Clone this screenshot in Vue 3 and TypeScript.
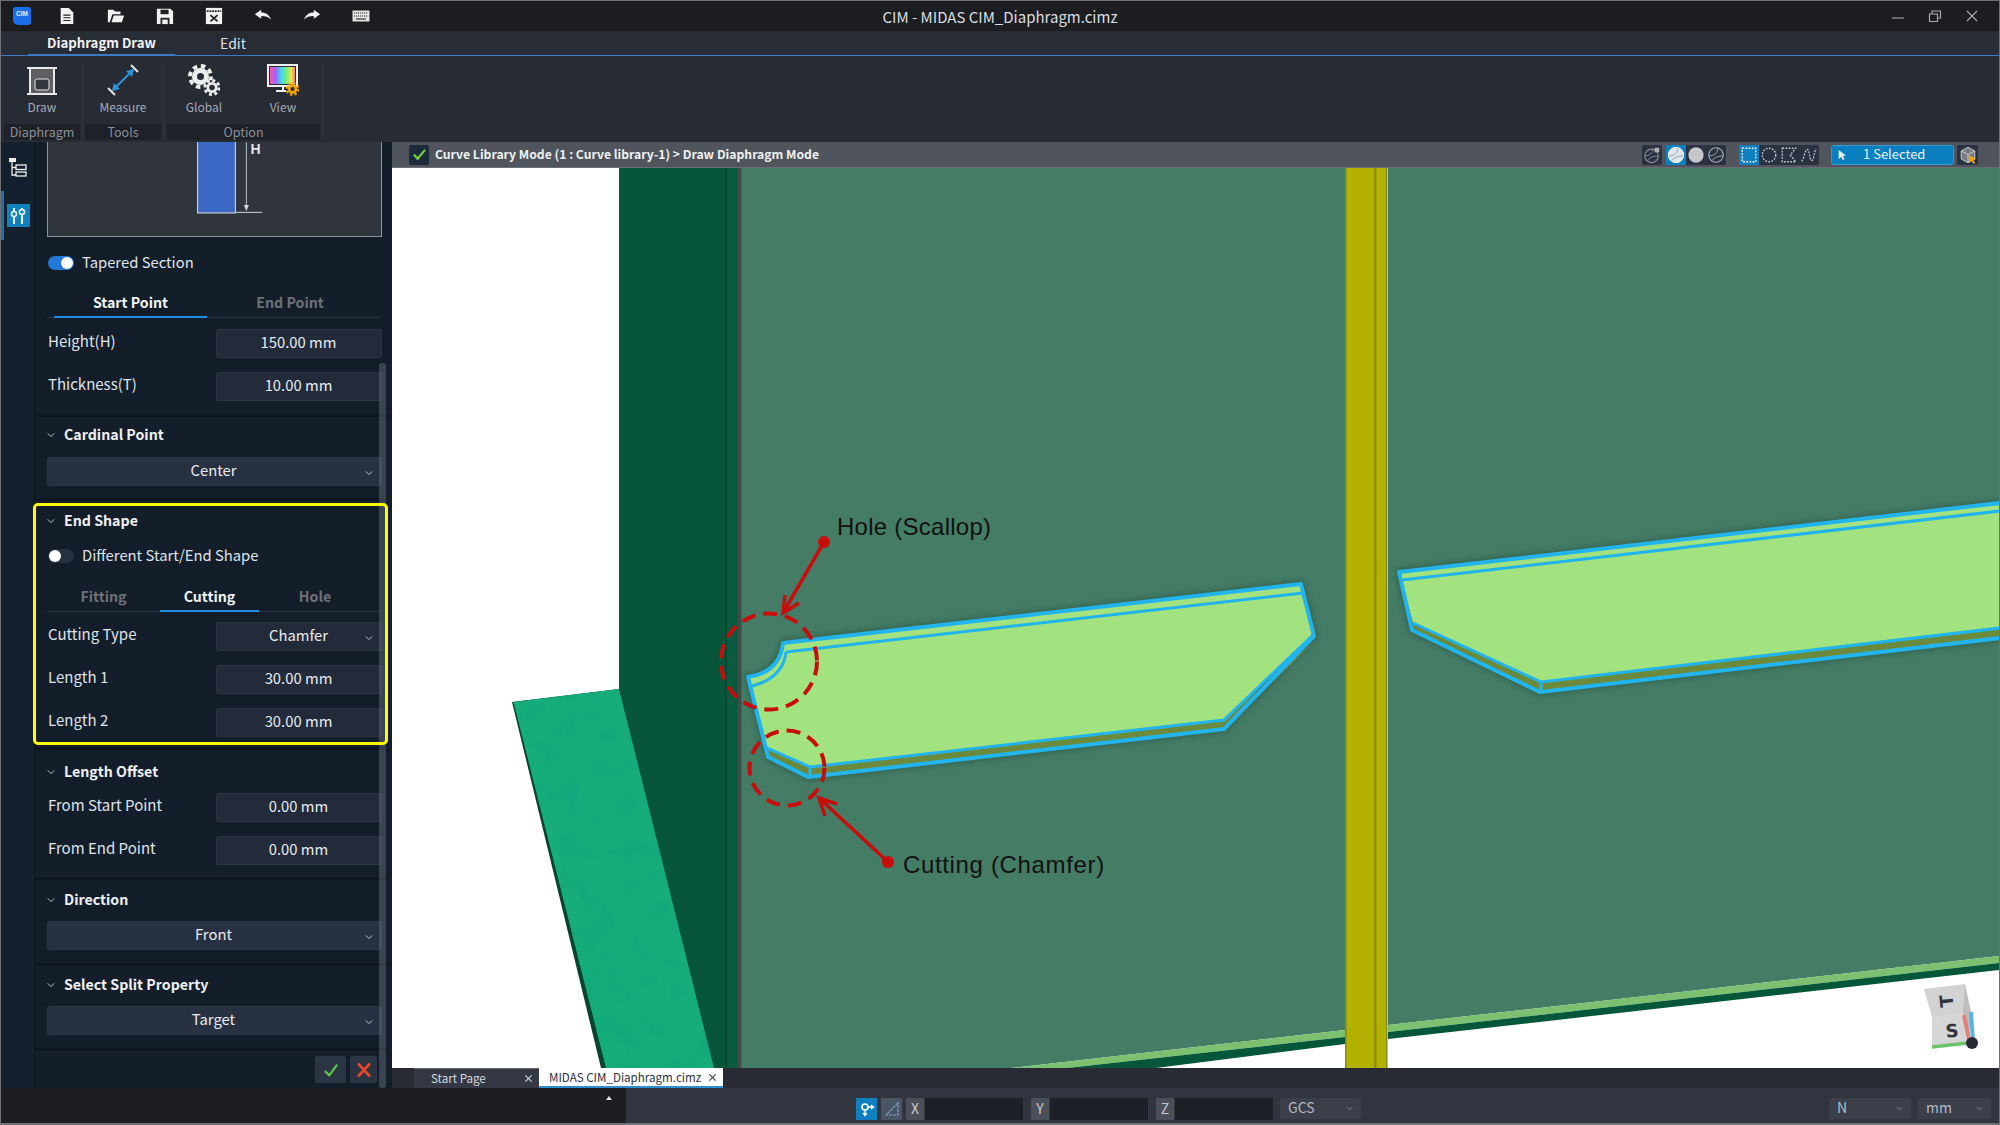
<script setup lang="ts">
interface Row { label: string; value: string; select?: boolean }
const sizeRows: Row[] = [
  { label: 'Height(H)', value: '150.00 mm' },
  { label: 'Thickness(T)', value: '10.00 mm' },
]
const cutRows: Row[] = [
  { label: 'Cutting Type', value: 'Chamfer', select: true },
  { label: 'Length 1', value: '30.00 mm' },
  { label: 'Length 2', value: '30.00 mm' },
]
const offsetRows: Row[] = [
  { label: 'From Start Point', value: '0.00 mm' },
  { label: 'From End Point', value: '0.00 mm' },
]
</script>

<template>
  <div class="app">
    <header class="titlebar">
      <div class="qa">
        <span class="logo">CIM</span>
        <svg class="qi" viewBox="0 0 20 20"><path d="M3 1h9l5 5v13H3z" fill="#f2f2f2"/><path d="M6 9h8M6 12h8M6 15h8" stroke="#222" stroke-width="1.200"/></svg>
        <svg class="qi" viewBox="0 0 20 20"><path d="M1 17V3h6l2 2h6v3H6l-3 9z" fill="#f2f2f2"/><path d="M5 17l2.500-7.500H19L16.500 17z" fill="#f2f2f2"/></svg>
        <svg class="qi" viewBox="0 0 20 20"><path d="M1 2h15l3 3v14H1z" fill="#f2f2f2"/><path d="M5 3h9v5H5z" fill="#222"/><path d="M5 12h10v7H5z" fill="#222"/><path d="M7 14h6v5H7z" fill="#f2f2f2"/></svg>
        <svg class="qi" viewBox="0 0 20 20"><path d="M1 1h18v18H1z" fill="#f2f2f2"/><path d="M2 4.500h16" stroke="#222" stroke-width="2" stroke-dasharray="2 1"/><path d="M6 9l8 7M14 9l-8 7" stroke="#222" stroke-width="2"/></svg>
        <svg class="qi" viewBox="0 0 20 20"><path d="M1 8l7-5v3c6 0 9 3 11 8-3-3-6-4-11-4v3z" fill="#f2f2f2"/></svg>
        <svg class="qi" viewBox="0 0 20 20"><path d="M19 8l-7-5v3C6 6 3 9 1 14c3-3 6-4 11-4v3z" fill="#f2f2f2"/></svg>
        <svg class="qi wide" viewBox="0 0 18 12"><rect x="0.500" y="0.500" width="17" height="11" fill="#e4e4e4"/><path d="M2 3h14M2 6h14" stroke="#333" stroke-width="1.200" stroke-dasharray="1.200 .8"/><path d="M4 9h10" stroke="#333" stroke-width="1.200"/></svg>
      </div>
      <div class="title">CIM - MIDAS CIM_Diaphragm.cimz</div>
      <div class="winctl">
        <svg viewBox="0 0 14 14"><path d="M1 9h12" stroke="#8f9296" stroke-width="1.300"/></svg>
        <svg viewBox="0 0 14 14"><path d="M1.500 5h8v7.500h-8zM4 5V2h8.500v7h-3" fill="none" stroke="#a8aaad" stroke-width="1.200"/></svg>
        <svg viewBox="0 0 14 14"><path d="M2 2l10 10M12 2L2 12" stroke="#a8aaad" stroke-width="1.200"/></svg>
      </div>
    </header>

    <nav class="tabbar">
      <div class="rtab active">Diaphragm Draw</div>
      <div class="rtab">Edit</div>
    </nav>

    <section class="ribbon">
      <div class="group g1">
        <div class="tools">
          <div class="tool">
            <svg viewBox="0 0 32 32" class="ticon"><rect x="5" y="4" width="22" height="26" fill="#5d5f63"/><path d="M1 4h30M1 30h30" stroke="#e8e8e8" stroke-width="2"/><path d="M4 4v26M28 4v26" stroke="#e8e8e8" stroke-width="2"/><rect x="9" y="15" width="14" height="11" rx="2" fill="#32353b" stroke="#e8e8e8" stroke-width="1"/></svg>
            <span>Draw</span>
          </div>
        </div>
        <div class="glabel">Diaphragm</div>
      </div>
      <div class="group g2">
        <div class="tools">
          <div class="tool">
            <svg viewBox="0 0 32 32" class="ticon"><path d="M6 26L26 6" stroke="#2f93d8" stroke-width="2"/><path d="M5 27l2-8 6 6zM27 5l-2 8-6-6z" fill="#2f93d8"/><path d="M1 24l7 7M24 1l7 7" stroke="#e4e4e4" stroke-width="2"/></svg>
            <span>Measure</span>
          </div>
        </div>
        <div class="glabel">Tools</div>
      </div>
      <div class="group g3">
        <div class="tools">
          <div class="tool t-global">
            <svg viewBox="0 0 32 32" class="ticon">
              <circle cx="12.500" cy="12.500" r="8.500" fill="#eceded"/>
              <circle cx="12.500" cy="12.500" r="10.500" fill="none" stroke="#eceded" stroke-width="4" stroke-dasharray="4.500 3.750"/>
              <circle cx="12.500" cy="12.500" r="3.500" fill="#272b34"/>
              <circle cx="24" cy="23.500" r="7.500" fill="#272b34"/>
              <circle cx="24" cy="23.500" r="5.500" fill="#eceded"/>
              <circle cx="24" cy="23.500" r="7" fill="none" stroke="#eceded" stroke-width="3" stroke-dasharray="3 2.500"/>
              <circle cx="24" cy="23.500" r="2.800" fill="#272b34"/>
            </svg>
            <span>Global</span>
          </div>
          <div class="tool t-view">
            <svg viewBox="0 0 32 32" class="ticon">
              <defs><linearGradient id="rb" x1="0" x2="1" y1="0" y2="0"><stop offset="0" stop-color="#ff4fb0"/><stop offset=".25" stop-color="#8f6cff"/><stop offset=".45" stop-color="#46d9f0"/><stop offset=".65" stop-color="#6df07a"/><stop offset=".85" stop-color="#f0e25a"/><stop offset="1" stop-color="#f08a50"/></linearGradient></defs>
              <rect x="1" y="1" width="29" height="21" fill="#272b34" stroke="#f0f0f0" stroke-width="2"/><rect x="3" y="3" width="25" height="17" fill="url(#rb)"/><path d="M16 23v4M9 27h10" stroke="#f0f0f0" stroke-width="2"/>
              <circle cx="25.500" cy="25" r="5" fill="#f2a20c"/>
              <circle cx="25.500" cy="25" r="6" fill="none" stroke="#f2a20c" stroke-width="2" stroke-dasharray="2.400 2.300"/>
              <circle cx="25.500" cy="25" r="2" fill="#272b34"/>
            </svg>
            <span>View</span>
          </div>
        </div>
        <div class="glabel">Option</div>
      </div>
    </section>

    <main class="body">
      <aside class="rail">
        <div class="rail-item">
          <svg viewBox="0 0 20 20"><rect x="1" y="1" width="7" height="4" fill="#f0f0f0"/><path d="M4 5v13h4M4 10.500h4" fill="none" stroke="#f0f0f0" stroke-width="1.300"/><rect x="8" y="8" width="10" height="4.500" fill="none" stroke="#f0f0f0" stroke-width="1.300"/><rect x="8" y="15" width="10" height="4" fill="none" stroke="#f0f0f0" stroke-width="1.300"/></svg>
        </div>
        <div class="rail-item on">
          <span class="railbox">
            <svg viewBox="0 0 20 20"><path d="M6 2v3M6 11v7M14 2v1M14 9v9" stroke="#e8f4fb" stroke-width="2"/><circle cx="6" cy="8" r="2.500" fill="none" stroke="#e8f4fb" stroke-width="1.500"/><circle cx="14" cy="6" r="2.500" fill="none" stroke="#e8f4fb" stroke-width="1.500"/></svg>
          </span>
        </div>
      </aside>

      <div class="panel">
        <div class="sec s-top">
          <div class="preview">
            <svg viewBox="0 0 333 94" class="prevsvg">
              <rect x="150" y="-5" width="38" height="76" fill="#3a68c4" stroke="#c7ccd4" stroke-width="1.200"/>
              <path d="M188 70.500h27" stroke="#b9bdc4" stroke-width="1.200"/>
              <path d="M199 0v66" stroke="#b9bdc4" stroke-width="1"/>
              <path d="M196.500 63h5l-2.500 6z" fill="#d4d6da"/>
              <text x="203" y="12" class="hmark">H</text>
            </svg>
          </div>
          <div class="togrow t1"><span class="tog on"><i></i></span><span class="txt">Tapered Section</span></div>
          <div class="subtabs two t1b">
            <div class="stab on">Start Point</div>
            <div class="stab">End Point</div>
          </div>
          <div class="rows r1">
            <div class="row" v-for="r in sizeRows" :key="r.label">
              <label>{{ r.label }}</label>
              <div class="val">{{ r.value }}</div>
            </div>
          </div>
        </div>

        <div class="sec s-card">
          <div class="head"><svg class="chev" viewBox="0 0 10 6"><path d="M1 1l4 4 4-4" fill="none" stroke="#c6ccd4" stroke-width="1.200"/></svg>Cardinal Point</div>
          <div class="full">Center<svg class="chev sel" viewBox="0 0 10 6"><path d="M1 1l4 4 4-4" fill="none" stroke="#c6ccd4" stroke-width="1.200"/></svg></div>
        </div>

        <div class="sec s-end">
          <div class="highlight"></div>
          <div class="head"><svg class="chev" viewBox="0 0 10 6"><path d="M1 1l4 4 4-4" fill="none" stroke="#c6ccd4" stroke-width="1.200"/></svg>End Shape</div>
          <div class="togrow t2"><span class="tog"><i></i></span><span class="txt">Different Start/End Shape</span></div>
          <div class="subtabs three t2b">
            <div class="stab">Fitting</div>
            <div class="stab on">Cutting</div>
            <div class="stab">Hole</div>
          </div>
          <div class="rows r2">
            <div class="row" v-for="r in cutRows" :key="r.label">
              <label>{{ r.label }}</label>
              <div class="val">{{ r.value }}<svg v-if="r.select" class="chev sel" viewBox="0 0 10 6"><path d="M1 1l4 4 4-4" fill="none" stroke="#c6ccd4" stroke-width="1.200"/></svg></div>
            </div>
          </div>
        </div>

        <div class="sec s-off">
          <div class="head"><svg class="chev" viewBox="0 0 10 6"><path d="M1 1l4 4 4-4" fill="none" stroke="#c6ccd4" stroke-width="1.200"/></svg>Length Offset</div>
          <div class="rows r3">
            <div class="row" v-for="r in offsetRows" :key="r.label">
              <label>{{ r.label }}</label>
              <div class="val">{{ r.value }}</div>
            </div>
          </div>
        </div>

        <div class="sec s-dir">
          <div class="head"><svg class="chev" viewBox="0 0 10 6"><path d="M1 1l4 4 4-4" fill="none" stroke="#c6ccd4" stroke-width="1.200"/></svg>Direction</div>
          <div class="full">Front<svg class="chev sel" viewBox="0 0 10 6"><path d="M1 1l4 4 4-4" fill="none" stroke="#c6ccd4" stroke-width="1.200"/></svg></div>
        </div>

        <div class="sec s-split">
          <div class="head"><svg class="chev" viewBox="0 0 10 6"><path d="M1 1l4 4 4-4" fill="none" stroke="#c6ccd4" stroke-width="1.200"/></svg>Select Split Property</div>
          <div class="full">Target<svg class="chev sel" viewBox="0 0 10 6"><path d="M1 1l4 4 4-4" fill="none" stroke="#c6ccd4" stroke-width="1.200"/></svg></div>
        </div>

        <div class="foot">
          <button class="fbtn"><svg viewBox="0 0 18 16"><path d="M2 9l5 5L16 2" fill="none" stroke="#5cc24a" stroke-width="2.600"/></svg></button>
          <button class="fbtn"><svg viewBox="0 0 16 16"><path d="M2 1.500l12 13M14 1.500l-12 13" fill="none" stroke="#e8452c" stroke-width="2.600"/></svg></button>
        </div>
        <div class="scroll"></div>
      </div>

      <div class="view">
        <div class="vbar">
          <span class="vcheck"><svg viewBox="0 0 16 14"><path d="M2 7l4 4.500L14 2" fill="none" stroke="#6fd03c" stroke-width="2.400"/></svg></span>
          <span class="crumb">Curve Library Mode (1 : Curve library-1) &gt; Draw Diaphragm Mode</span>
          <div class="vtools">
            <div class="vgrp w20">
              <svg viewBox="0 0 20 20"><circle cx="9.500" cy="11" r="7.500" fill="none" stroke="#8d9298" stroke-width="1.200"/><path d="M2 11c5 0 9-3 9-8M5 17c1-3 5-6 12-6" fill="none" stroke="#8d9298" stroke-width="1"/><rect x="13" y="2" width="5" height="5" fill="#aeb2b6"/></svg>
            </div>
            <div class="vgrp w60">
              <span class="cell on"><svg viewBox="0 0 20 20"><circle cx="10" cy="10" r="8.500" fill="#dfe4e8" stroke="#fff"/><path d="M2 11c6 0 10-3 10-9M5 17c1-3 6-6 13-6" fill="none" stroke="#8fa0ac" stroke-width="1"/></svg></span>
              <span class="cell"><svg viewBox="0 0 20 20"><circle cx="10" cy="10" r="8.500" fill="#c4c6ca"/></svg></span>
              <span class="cell"><svg viewBox="0 0 20 20"><circle cx="10" cy="10" r="8" fill="none" stroke="#a9adb2" stroke-width="1.200"/><path d="M2 11c6 0 10-3 10-9M5 17c1-3 6-6 13-6" fill="none" stroke="#a9adb2" stroke-width="1"/></svg></span>
            </div>
            <div class="vgrp w80 gapl">
              <span class="cell on"><svg viewBox="0 0 20 20"><rect x="2.500" y="2.500" width="15" height="15" fill="none" stroke="#f0f8ff" stroke-width="1.500" stroke-dasharray="2 1.500"/></svg></span>
              <span class="cell"><svg viewBox="0 0 20 20"><circle cx="10" cy="10" r="7.500" fill="none" stroke="#c4c8cc" stroke-width="1.500" stroke-dasharray="2 1.500"/></svg></span>
              <span class="cell"><svg viewBox="0 0 20 20"><path d="M2.500 2.500h15l-6 7.500 6 7.500h-15z" fill="none" stroke="#c4c8cc" stroke-width="1.500" stroke-dasharray="2 1.500"/></svg></span>
              <span class="cell"><svg viewBox="0 0 20 20"><path d="M2 17c3-4 3-12 6-13s2 12 5 12 2-9 5-13" fill="none" stroke="#c4c8cc" stroke-width="1.500" stroke-dasharray="2 1.500"/></svg></span>
            </div>
            <div class="selbox">
              <svg viewBox="0 0 12 14"><path d="M2 1v11l3-3 2 4 2-1-2-4h4z" fill="#eef6fb"/></svg>
              <span>1 Selected</span>
            </div>
            <div class="vgrp w21">
              <svg viewBox="0 0 20 20"><path d="M10 1.500l7.500 4v9L10 18.500l-7.500-4v-9z" fill="#777b80" stroke="#d4d6d8"/><path d="M2.500 5.500L10 9.500l7.500-4M10 9.500v9" fill="none" stroke="#d4d6d8"/><path d="M11 10v9l3 -2.500 2 3.500 2-1-2-3.500 3-1z" fill="#e8a41a"/></svg>
            </div>
          </div>
        </div>

        <div class="canvas">
          <svg class="scene" viewBox="392 168 1608 900" width="1608" height="900">
            <defs>
              <filter id="tex" x="0" y="0" width="100%" height="100%">
                <feTurbulence type="fractalNoise" baseFrequency=".05" numOctaves="3" seed="4"/>
                <feColorMatrix values="0 0 0 0 0  0 0 0 0 .3  0 0 0 0 .2  0 0 0 1.800 -.8"/>
                <feComposite in2="SourceAlpha" operator="in"/>
              </filter>
            </defs>
            <rect x="392" y="168" width="1608" height="900" fill="#fff"/>
            <rect x="619" y="168" width="106" height="900" fill="#07553a"/>
            <rect x="725" y="168" width="2" height="900" fill="#044a30"/>
            <rect x="727" y="168" width="11" height="900" fill="#0a5a3f"/>
            <path d="M512 702L619 689L714 1068H601z" fill="#08442e"/>
            <path d="M513.500 702L619 689L714 1068H606z" fill="#17ad7b"/>
            <path d="M513.500 702L619 689L714 1068H606z" filter="url(#tex)" opacity=".35"/>
            <path d="M740 168H1345V1030L1011 1068H740z" fill="#457c66"/>
            <path d="M1388 168H2000V956L1388 1025z" fill="#457c66"/>
            <path d="M1011 1068L1345 1030V1037L1067 1068z" fill="#7cc170"/>
            <path d="M1067 1068L1345 1037V1044L1156 1068z" fill="#06573a"/>
            <path d="M1388 1025L2000 956V963L1388 1032z" fill="#7cc170"/>
            <path d="M1388 1032L2000 963V970L1388 1039z" fill="#06573a"/>
            <rect x="738" y="168" width="3.500" height="900" fill="#3d4d47"/>
            <rect x="1345" y="168" width="42" height="900" fill="#b3b200"/>
            <rect x="1374" y="168" width="2.500" height="900" fill="#8f8e00"/>
            <rect x="1345" y="168" width="1.500" height="900" fill="#7e8a1a"/>
            <rect x="1386" y="168" width="1.500" height="900" fill="#7e8a1a"/>

            <g class="glow">
              <path d="M783 643L1301 584L1314 636L1224 729L808 777L768 757L748 677Q780 672 783 643z"/>
              <path d="M1399 572L2000 503V638L1540 692L1412 630z"/>
            </g>

            <path d="M765 747L768 757L808 777L1224 729L1316 640L1224 720L810 767z" fill="#6b8a3b"/>
            <path d="M783 643L1301 584L1314 634L1224 720L810 767L765 747L748 677Q780 672 783 643z" fill="#a3e37f"/>
            <path d="M783 643L1301 584L1314 636L1224 729L808 777L768 757L748 677Q780 672 783 643z" fill="none" stroke="#22b4ec" stroke-width="4" stroke-linejoin="round"/>
            <path d="M786 652L1303 593M752 686Q783 678 786 652M765 747L810 767L1224 720L1314 634M810 767V777" fill="none" stroke="#22b4ec" stroke-width="3"/>

            <path d="M1412 628L1540 692L2000 638V628L1541 682L1413 623z" fill="#6b8a3b"/>
            <path d="M1399 572L2000 503V628L1541 682L1413 623z" fill="#a3e37f"/>
            <path d="M2000 503L1399 572L1412 630L1540 692L2000 638" fill="none" stroke="#22b4ec" stroke-width="4" stroke-linejoin="round"/>
            <path d="M1402 580L2000 511M1413 623L1541 682L2000 628M1541 682V692" fill="none" stroke="#22b4ec" stroke-width="3"/>

            <g class="anno">
              <circle cx="769" cy="661.500" r="48" class="dash"/>
              <circle cx="787" cy="768" r="37.500" class="dash"/>
              <circle cx="824" cy="542" r="6" class="dot"/>
              <circle cx="888" cy="862" r="6" class="dot"/>
              <path d="M824 542L783 613M785 595L783 613L799 603M888 862L819 798M837 804L819 798L825 816" class="ln"/>
            </g>
            <text x="837" y="535" class="note">Hole (Scallop)</text>
            <text x="903" y="873" class="note n2">Cutting (Chamfer)</text>

            <g class="gizmo">
              <path d="M1924 989L1965 984L1968 1013L1932 1017z" fill="#d2d2d2"/>
              <path d="M1932 1017L1963 1013L1967 1042L1932 1046z" fill="#d6d6d6"/>
              <path d="M1965 984L1971 1012L1969 1040L1963 1013z" fill="#bdbdbd"/>
              <path d="M1971 1012L1973 1042" stroke="#58b4e4" stroke-width="4"/>
              <path d="M1964 1015L1969 1040" stroke="#e2807a" stroke-width="4"/>
              <path d="M1932 1047L1968 1043" stroke="#6ec36a" stroke-width="3.500"/>
              <circle cx="1972" cy="1043" r="6" fill="#272b34"/>
              <text x="1952" y="1037" class="gs" transform="rotate(-6 1952 1030)">S</text>
              <text x="1947" y="1007" class="gs" transform="rotate(-96 1947 1001)">T</text>
            </g>
          </svg>
        </div>

        <div class="doctabs">
          <div class="dtab">Start Page<svg viewBox="0 0 10 10"><path d="M1.500 1.500l7 7M8.500 1.500l-7 7" stroke="#d4d8de" stroke-width="1.200"/></svg></div>
          <div class="dtab on">MIDAS CIM_Diaphragm.cimz<svg viewBox="0 0 10 10"><path d="M1.500 1.500l7 7M8.500 1.500l-7 7" stroke="#39404c" stroke-width="1.200"/></svg></div>
        </div>
      </div>
    </main>

    <footer class="status">
      <div class="sleft"><i class="uptri"></i></div>
      <div class="sright">
        <span class="sbtn blue"><svg viewBox="0 0 16 16"><circle cx="6" cy="6" r="3" fill="none" stroke="#fff" stroke-width="1.600"/><path d="M6 9v5M4 12l2 2.500L8 12M9 6h5M12 4l2.500 2L12 8" fill="none" stroke="#fff" stroke-width="1.300"/></svg></span>
        <span class="sbtn gray"><svg viewBox="0 0 16 16"><path d="M14 2L2 14h12z" fill="none" stroke="#7fa6cc" stroke-width="1.200" stroke-dasharray="3 1"/></svg></span>
        <span class="axis">X</span><span class="coord"></span>
        <span class="axis">Y</span><span class="coord"></span>
        <span class="axis">Z</span><span class="coord"></span>
        <span class="dd gcs">GCS<svg class="chev dsel" viewBox="0 0 10 6"><path d="M1 1l4 4 4-4" fill="none" stroke="#8d939b" stroke-width="1.200"/></svg></span>
        <span class="spacer"></span>
        <span class="dd un">N<svg class="chev dsel" viewBox="0 0 10 6"><path d="M1 1l4 4 4-4" fill="none" stroke="#8d939b" stroke-width="1.200"/></svg></span>
        <span class="dd um">mm<svg class="chev dsel" viewBox="0 0 10 6"><path d="M1 1l4 4 4-4" fill="none" stroke="#8d939b" stroke-width="1.200"/></svg></span>
      </div>
    </footer>
  </div>
</template>

<style>
html, body { margin: 0; padding: 0; background: #1d1e22; }
</style>

<style scoped>
.app {
  width: 2000px; height: 1125px; box-sizing: border-box; overflow: hidden;
  border: 1px solid #6f7174; border-bottom-width: 2px;
  display: flex; flex-direction: column;
  font-family: "Noto Sans CJK KR", "Noto Sans", sans-serif; color: #e6e9ee; font-size: 15px;
}
svg { display: block; }
.titlebar { height: 30px; flex: none; background: #1b1d21; display: flex; align-items: center; position: relative; }
.qa { display: flex; align-items: center; padding-left: 12px; }
.logo { width: 18px; height: 18px; background: #1a6fe8; border-radius: 3px 3px 3px 5px; font: 700 6.500px "Liberation Sans", sans-serif; color: #e6f0ff; text-align: center; line-height: 13px; margin-right: 27px; }
.qi { width: 18px; height: 18px; margin-right: 31px; }
.qi.wide { width: 18px; height: 12px; }
.title { position: absolute; left: 0; right: 0; text-align: center; font-size: 15px; line-height: 20px; color: #dcdee0; top: 6px; }
.winctl { margin-left: auto; display: flex; gap: 23px; padding-right: 20px; }
.winctl svg { width: 14px; height: 14px; }

.tabbar { height: 25px; flex: none; background: #282c35; border-bottom: 1px solid #3b7bc4; display: flex; box-sizing: border-box; padding-left: 27px; }
.rtab { font-size: 14px; line-height: 24px; color: #dfe3e8; width: 60px; text-align: center; }
.rtab.active { width: 147px; font-size: 13.200px; font-weight: 700; color: #f2f4f7; border-bottom: 2px solid #3b7bc4; margin-bottom: -1px; height: 25px; box-sizing: border-box; margin-right: 28px; }

.ribbon { height: 86px; flex: none; background: #272b34; display: flex; padding-left: 3px; }
.group { display: flex; flex-direction: column; margin-right: 5px; position: relative; padding-top: 8px; }
.group::after { content: ""; position: absolute; right: -3px; top: 7px; bottom: 4px; width: 1px; background: #33373f; }
.g1 { width: 76px; } .g2 { width: 76px; } .g3 { width: 153px; margin-left: 1px; }
.tools { display: flex; height: 60px; }
.tool { flex: 1; display: flex; flex-direction: column; align-items: center; font-size: 12px; color: #a4aab4; }
.tool span { margin-top: 2px; line-height: 17px; }
.ticon { width: 32px; height: 32px; }
.t-global { flex: none; width: 74px; } .t-view { flex: none; width: 74px; margin-left: 5px; }
.glabel { height: 16px; background: #1e2128; font-size: 12.500px; line-height: 15px; color: #8a909a; text-align: center; }

.body { flex: 1; min-height: 0; display: flex; }
.rail { width: 34px; flex: none; background: #14202e; box-shadow: inset -1px 0 0 #0d1520; }
.rail-item { height: 49px; display: flex; align-items: center; justify-content: center; }
.rail-item svg { width: 20px; height: 20px; }
.rail-item.on { box-shadow: inset 3px 0 0 #24719f; }
.railbox { width: 23px; height: 23px; background: #1180bd; display: flex; align-items: center; justify-content: center; }

.panel { width: 357px; flex: none; background: #141e2b; position: relative; }
.sec { box-sizing: border-box; padding: 0 5px 0 12px; border-bottom: 3px solid #0e1620; position: relative; width: 352px; }
.preview { height: 95px; box-sizing: border-box; border: 1.500px solid #8e939a; border-top: none; background: #30343d; }
.prevsvg { width: 332px; height: 94px; overflow: hidden; }
.hmark { font: 700 14px "Liberation Sans", sans-serif; fill: #e4e6ea; }
.togrow { display: flex; align-items: center; height: 14px; }
.t1 { margin-top: 19px; } .t2 { margin-top: 16px; }
.tog { width: 26px; height: 14px; border-radius: 7px; background: #263141; position: relative; flex: none; margin-left: 1px; }
.tog.on { background: #2277d8; }
.tog i { position: absolute; width: 12px; height: 12px; border-radius: 50%; background: #fff; left: 1px; top: 1px; }
.tog.on i { left: 13px; }
.txt { margin-left: 8px; font-size: 14.800px; line-height: 20px; color: #dfe4ea; white-space: nowrap; position: relative; top: -1px; }
.subtabs { display: flex; height: 28px; box-sizing: border-box; border-bottom: 1px solid #2a3543; margin-right: 2px; }
.t1b { margin-top: 20px; } .t2b { margin-top: 21px; }
.stab { font-size: 14.200px; font-weight: 700; color: #6c7277; text-align: center; line-height: 25px; height: 28px; box-sizing: border-box; margin-bottom: -1px; flex: none; }
.stab.on { color: #f0f2f5; border-bottom: 2px solid #1e8fe0; }
.two .stab:first-child { width: 153px; margin-left: 7px; }
.two .stab:last-child { width: 166px; }
.three .stab:nth-child(1) { width: 113px; }
.three .stab:nth-child(2) { width: 99px; }
.three .stab:nth-child(3) { width: 112px; }
.rows { display: flex; flex-direction: column; gap: 14px; }
.r1 { margin-top: 11px; } .r2 { margin-top: 10px; } .r3 { margin-top: 9px; }
.row { display: flex; height: 29px; align-items: center; justify-content: space-between; }
.row label { font-size: 15px; line-height: 20px; color: #dfe4ea; padding: 0 0 6px 1px; white-space: nowrap; }
.val, .full { box-sizing: border-box; height: 29px; background: #232b3a; border: 1px solid #2d3543; border-radius: 2px; text-align: center; line-height: 24px; padding-right: 1px; font-size: 14.800px; color: #e8ebef; position: relative; }
.val { width: 166px; }
.full { background: #283142; padding-right: 2px; }
.sel { position: absolute; right: 8px; top: 12px; }
.head { height: 24px; display: flex; align-items: center; font-weight: 700; font-size: 14.200px; color: #eef0f3; white-space: nowrap; padding-bottom: 2px; box-sizing: border-box; }
.chev { width: 8px; height: 6px; flex: none; }
.head .chev { margin: 2px 9px 0 0; }
.s-top { padding-bottom: 13px; }
.s-card { padding-top: 6px; padding-bottom: 12px; }
.s-card .full { margin-top: 10px; }
.s-dir .full, .s-split .full { margin-top: 9px; }
.s-end { padding-top: 8px; padding-bottom: 10px; }
.s-off { padding-top: 10px; padding-bottom: 12px; }
.s-dir { padding-top: 8px; padding-bottom: 13px; }
.s-split { padding-top: 7px; padding-bottom: 13px; }
.highlight { position: absolute; left: -2px; top: 2px; width: 355px; height: 242px; box-sizing: border-box; border: 3px solid #ffff00; border-radius: 5px; pointer-events: none; z-index: 2; }
.foot { display: flex; justify-content: flex-end; gap: 4px; padding: 5px 10px 0 0; width: 352px; box-sizing: border-box; }
.fbtn { width: 27px; height: 27px; padding: 0; border: 1px solid #2c3644; background: #2a3442; border-radius: 2px; display: flex; align-items: center; justify-content: center; }
.fbtn:first-child { width: 31px; }
.fbtn svg { width: 16px; height: 16px; }
.scroll { position: absolute; left: 344px; width: 7px; top: 221px; bottom: 0; background: rgba(120,130,142,.38); border-radius: 3px; z-index: 1; }

.view { flex: 1; min-width: 0; display: flex; flex-direction: column; }
.vbar { height: 26px; flex: none; background: #50555d; display: flex; align-items: center; padding-left: 17px; border-bottom: 1px solid #6a6e74; box-sizing: border-box; position: relative; }
.vcheck { width: 20px; height: 20px; background: #1d2a3a; border-radius: 2px; display: flex; align-items: center; justify-content: center; }
.vcheck svg { width: 15px; height: 13px; }
.crumb { margin-left: 6px; font-size: 12.200px; line-height: 20px; font-weight: 700; color: #eef1f4; white-space: nowrap; position: relative; top: -1px; }
.vtools { margin-left: auto; display: flex; align-items: center; padding-right: 21px; }
.vgrp { height: 20px; background: #2a3140; border-radius: 2px; display: flex; align-items: center; justify-content: center; }
.vgrp svg { width: 18px; height: 18px; }
.w20 { width: 20px; margin-right: 4px; } .w60 { width: 60px; } .w80 { width: 80px; } .w21 { width: 21px; margin-left: 3px; }
.gapl { margin-left: 13px; margin-right: 12px; }
.cell { flex: 1; height: 20px; display: flex; align-items: center; justify-content: center; }
.cell.on { background: #0f7fc0; }
.selbox { width: 123px; height: 20px; box-sizing: border-box; background: #0a7fc0; border: 1px solid #2f9bd8; border-radius: 3px; display: flex; align-items: center; padding-left: 5px; font-size: 13px; line-height: 18px; color: #eaf5fb; }
.selbox svg { width: 10px; height: 12px; }
.selbox span { margin-left: 16px; position: relative; top: -1px; }
.canvas { height: 900px; flex: none; overflow: hidden; }
.scene { display: block; }
.glow path { fill: none; stroke: #1c4634; stroke-width: 6; opacity: .55; filter: blur(3px); }
.dash { fill: none; stroke: #c80d0d; stroke-width: 4; stroke-dasharray: 14 8; }
.dot { fill: #c80d0d; }
.ln { fill: none; stroke: #c80d0d; stroke-width: 3.500; }
.note { font: 400 24px "Liberation Sans", sans-serif; fill: #111; letter-spacing: .25px; }
.n2 { letter-spacing: .65px; }
.gs { font: 700 18px "DejaVu Sans", sans-serif; fill: #30343c; text-anchor: middle; }
.doctabs { height: 20px; flex: none; background: #282b33; display: flex; padding-left: 22px; }
.dtab { height: 20px; box-sizing: border-box; font-size: 11.600px; line-height: 15px; display: flex; align-items: center; padding-left: 17px; background: #333844; color: #d8dce2; width: 125px; position: relative; border-top: 1px solid #666; white-space: nowrap; }
.dtab svg { position: absolute; right: 6px; top: 5px; width: 9px; height: 9px; }
.dtab.on { background: #fff; color: #2b3340; width: 184px; padding-left: 10px; border-top: none; border-bottom: 2px solid #2f8ecb; }

.status { height: 35px; flex: none; display: flex; }
.sleft { width: 625px; background: #1d1e22; position: relative; }
.uptri { position: absolute; left: 605px; top: 8px; border-left: 3.500px solid transparent; border-right: 3.500px solid transparent; border-bottom: 4px solid #e4e4e4; }
.sright { flex: 1; background: #30353f; display: flex; align-items: flex-start; padding: 10px 8px 0 230px; box-sizing: border-box; }
.sbtn { width: 21px; height: 22px; display: flex; align-items: center; justify-content: center; margin-right: 4px; }
.sbtn svg { width: 16px; height: 16px; }
.blue { background: #0f7fc0; } .gray { background: #4a5563; }
.axis { width: 18px; height: 22px; background: #4a4f59; font-size: 14px; line-height: 20px; text-align: center; color: #c6cad0; margin-right: 1px; }
.coord { width: 98px; height: 22px; background: #1d2027; margin-right: 8px; }
.dd { height: 21px; background: #3a3f4a; border-radius: 2px; color: #b4bac2; font-size: 14px; line-height: 19px; padding-left: 8px; box-sizing: border-box; position: relative; }
.dsel { position: absolute; right: 8px; top: 8px; width: 7px; height: 5px; }
.gcs { width: 81px; margin-left: -1px; }
.spacer { flex: 1; }
.un { width: 82px; margin-right: 7px; }
.um { width: 73px; }
</style>
